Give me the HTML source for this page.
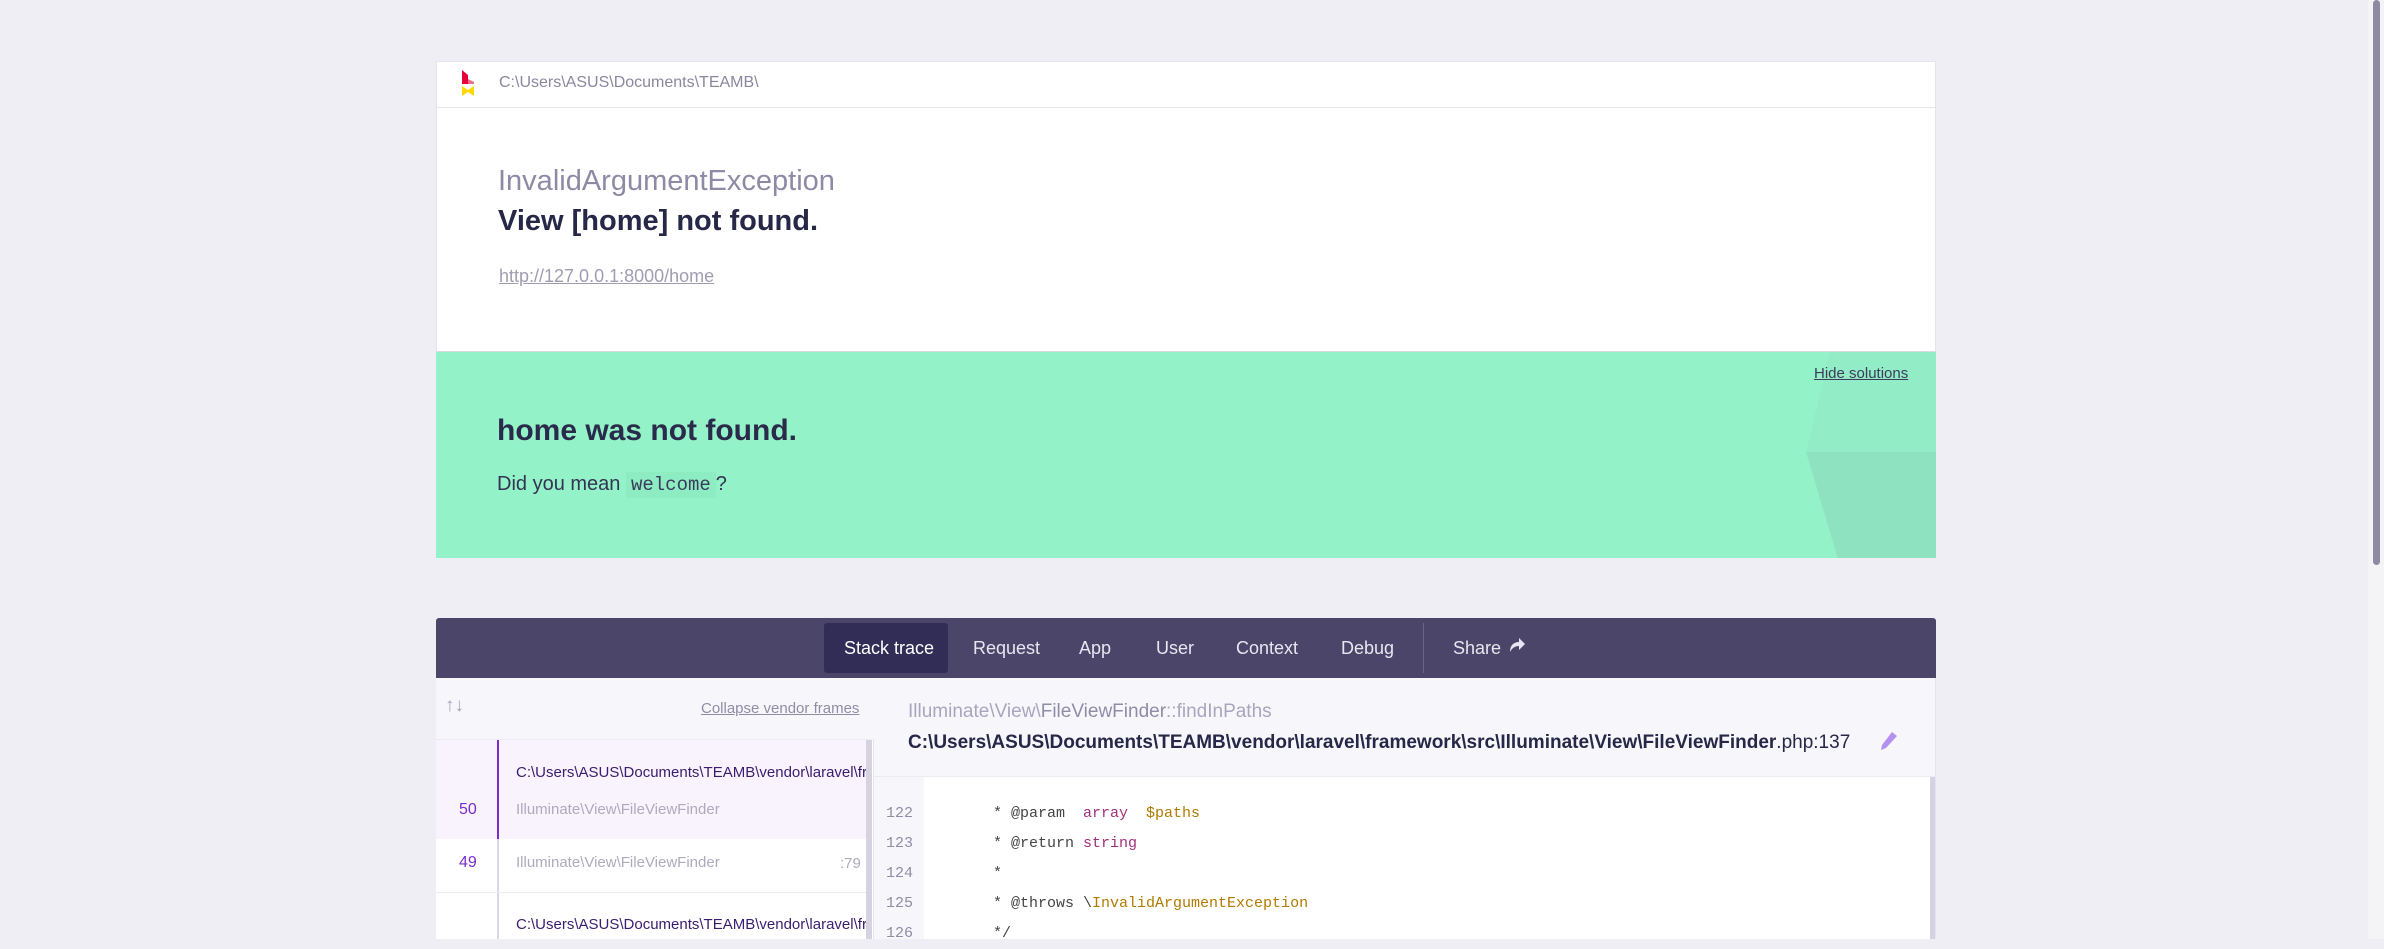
<!DOCTYPE html>
<html><head><meta charset="utf-8"><style>
*{margin:0;padding:0;box-sizing:border-box}
body{width:2384px;height:939px;overflow:hidden;background:#eeeef4;font-family:"Liberation Sans",sans-serif;position:relative}
.a{position:absolute;white-space:nowrap}
.mono{font-family:"Liberation Mono",monospace}
</style></head><body>
<div class="a" style="left:436px;top:61px;width:1500px;height:497px;background:#fff;border:1px solid #e4e4ee"></div>
<div class="a" style="left:437px;top:107px;width:1498px;height:1px;background:#e6e6ee"></div>
<svg class="a" style="left:460px;top:70px" width="16" height="28" viewBox="0 0 16 28"><path d="M2 0 L8 5 L8 14 L2 14Z" fill="#e8003c"/><path d="M8 9 L14 12 L14 14 L8 14Z" fill="#f06b8a"/><path d="M2 16 L8 20 L14 16 L14 26 L8 22 L2 26Z" fill="#ffd800"/></svg>
<div class="a" style="left:499px;top:74px;font-size:16px;color:#8a879e">C:\Users\ASUS\Documents\TEAMB\</div>
<div class="a" style="left:498px;top:165px;font-size:29px;color:#8e8aa5">InvalidArgumentException</div>
<div class="a" style="left:498px;top:205px;font-size:29px;font-weight:bold;color:#272748">View [home] not found.</div>
<div class="a" style="left:499px;top:266px;font-size:18px;color:#a09db2;text-decoration:underline">http://127.0.0.1:8000/home</div>
<div class="a" style="left:436px;top:351px;width:1500px;height:207px;background:#94f2c8;border-top:1px solid #d8dbe2;overflow:hidden">
<svg class="a" style="left:1334px;top:0" width="166" height="207" viewBox="0 0 166 207"><path d="M60 0 L166 0 L166 100 L36 100Z" fill="#92ecc5"/><path d="M36 100 L166 100 L166 207 L68 207Z" fill="#8ee2c0"/></svg>
</div>
<div class="a" style="left:1814px;top:365px;font-size:15px;color:#3c3c5c;text-decoration:underline">Hide solutions</div>
<div class="a" style="left:497px;top:414px;font-size:30px;font-weight:bold;color:#2a2a4a">home was not found.</div>
<div class="a" style="left:497px;top:473px;font-size:20px;color:#333352">Did you mean <span class="mono" style="background:#8eecc3;padding:2px 5px;color:#3b3b5a;font-size:19px">welcome</span>?</div>
<div class="a" style="left:436px;top:618px;width:1500px;height:60px;background:#4b4669;border-radius:3px 3px 0 0"></div>
<div class="a" style="left:824px;top:623px;width:124px;height:50px;background:#322d56;border-radius:3px"></div>
<div class="a" style="left:844px;top:638px;font-size:18px;color:#fff">Stack trace</div>
<div class="a" style="left:973px;top:638px;font-size:18px;color:#e8e6f2">Request</div>
<div class="a" style="left:1079px;top:638px;font-size:18px;color:#e8e6f2">App</div>
<div class="a" style="left:1156px;top:638px;font-size:18px;color:#e8e6f2">User</div>
<div class="a" style="left:1236px;top:638px;font-size:18px;color:#e8e6f2">Context</div>
<div class="a" style="left:1341px;top:638px;font-size:18px;color:#e8e6f2">Debug</div>
<div class="a" style="left:1423px;top:623px;width:1px;height:50px;background:#6a6588"></div>
<div class="a" style="left:1453px;top:638px;font-size:18px;color:#e8e6f2">Share</div>
<svg class="a" style="left:1508px;top:636px" width="18" height="18" viewBox="0 0 18 18"><path d="M2 16 C2 9 6 6 11 6 L11 2 L17 8 L11 14 L11 10 C7 10 4 12 2 16Z" fill="#e8e6f2"/></svg>
<div class="a" style="left:436px;top:678px;width:438px;height:261px;background:#fff;border-right:1px solid #e4e4ee"></div>
<div class="a" style="left:436px;top:678px;width:438px;height:62px;background:#f7f7fb;border-bottom:1px solid #ebebf2"></div>
<div class="a" style="left:445px;top:695px;font-size:19px;color:#a8a5bd">↑↓</div>
<div class="a" style="left:701px;top:700px;font-size:15px;color:#8f8ca6;text-decoration:underline">Collapse vendor frames</div>
<div class="a" style="left:436px;top:740px;width:436px;height:99px;background:#f8f3fc"></div>
<div class="a" style="left:497px;top:740px;width:2px;height:99px;background:#7a2ccf"></div>
<div class="a" style="left:516px;top:764px;font-size:15px;color:#3a1d6e">C:\Users\ASUS\Documents\TEAMB\vendor\laravel\fr</div>
<div class="a" style="left:459px;top:801px;font-size:16px;color:#7a2ccf">50</div>
<div class="a" style="left:516px;top:801px;font-size:15px;color:#aeaabd">Illuminate\View\FileViewFinder</div>
<div class="a" style="left:497px;top:839px;width:2px;height:100px;background:#dcd6ea"></div>
<div class="a" style="left:436px;top:892px;width:436px;height:1px;background:#ebebf2"></div>
<div class="a" style="left:459px;top:854px;font-size:16px;color:#7a2ccf">49</div>
<div class="a" style="left:516px;top:854px;font-size:15px;color:#aeaabd">Illuminate\View\FileViewFinder</div>
<div class="a" style="left:840px;top:855px;font-size:15px;color:#aeaabd">:79</div>
<div class="a" style="left:516px;top:916px;font-size:15px;color:#3a1d6e">C:\Users\ASUS\Documents\TEAMB\vendor\laravel\fr</div>
<div class="a" style="left:866px;top:740px;width:6px;height:199px;background:#d5d3e0"></div>
<div class="a" style="left:874px;top:678px;width:1062px;height:99px;background:#f7f7fb;border-bottom:1px solid #ebebf2;border-right:1px solid #e4e4ee"></div>
<div class="a" style="left:908px;top:701px;font-size:19px;color:#a8a5bd">Illuminate\View\<span style="color:#8f8ca6">FileViewFinder</span>::findInPaths</div>
<div class="a" style="left:908px;top:732px;font-size:19px;color:#272748"><b>C:\Users\ASUS\Documents\TEAMB\vendor\laravel\framework\src\Illuminate\View\FileViewFinder</b>.php:137</div>
<svg class="a" style="left:1880px;top:731px" width="18" height="20" viewBox="0 0 18 20"><path d="M12 1 L17 5 L6 17 L1 19 L2 14Z" fill="#b690f0"/></svg>
<div class="a" style="left:874px;top:777px;width:1062px;height:162px;background:#fff;border-right:1px solid #e4e4ee"></div>
<div class="a" style="left:874px;top:777px;width:50px;height:162px;background:#f7f7fb"></div>
<div class="a" style="left:1930px;top:777px;width:5px;height:162px;background:#d5d3e0"></div>
<div class="a mono" style="left:886px;top:799px;font-size:15px;line-height:30px;color:#8f8ca6;white-space:pre">122
123
124
125
126</div>
<div class="a mono" style="left:993px;top:799px;font-size:15px;line-height:30px;color:#444;white-space:pre">* @param  <span style="color:#a1307a">array</span>  <span style="color:#b07a00">$paths</span>
* @return <span style="color:#a1307a">string</span>
*
* @throws \<span style="color:#b07a00">InvalidArgumentException</span>
*/</div>
<div class="a" style="left:2368px;top:0;width:16px;height:939px;background:#f4f4f6"></div>
<div class="a" style="left:2373px;top:0;width:7px;height:565px;background:#8e8aa3;border-radius:4px"></div>
</body></html>
